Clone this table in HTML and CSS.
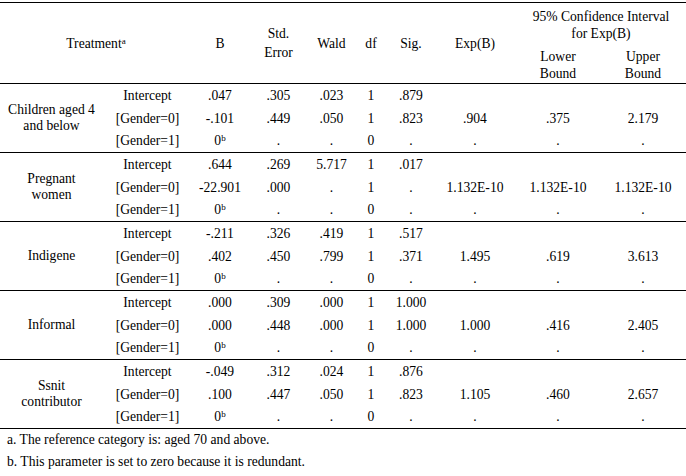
FILE: index.html
```html
<!DOCTYPE html>
<html>
<head>
<meta charset="utf-8">
<link rel="stylesheet" href="styles.css">
</head>
<body>
<div class="table">
  <div class="head">
    <div class="c treat"><span>Treatment<sup class="sup">a</sup></span></div>
    <div class="c h-b">B</div>
    <div class="c h-se"><span>Std.<br>Error</span></div>
    <div class="c h-wald">Wald</div>
    <div class="c h-df">df</div>
    <div class="c h-sig">Sig.</div>
    <div class="c h-exp">Exp(B)</div>
    <div class="c ci"><span>95% Confidence Interval<br>for Exp(B)</span></div>
    <div class="c lo"><span>Lower<br>Bound</span></div>
    <div class="c up"><span>Upper<br>Bound</span></div>
  </div>

  <div class="group">
    <div class="c label"><span>Children aged 4<br>and below</span></div>
    <div class="c">Intercept</div><div class="c">.047</div><div class="c">.305</div><div class="c">.023</div><div class="c">1</div><div class="c">.879</div><div class="c"></div><div class="c"></div><div class="c"></div>
    <div class="c">[Gender=0]</div><div class="c">-.101</div><div class="c">.449</div><div class="c">.050</div><div class="c">1</div><div class="c">.823</div><div class="c">.904</div><div class="c">.375</div><div class="c">2.179</div>
    <div class="c">[Gender=1]</div><div class="c"><span>0<sup class="sup">b</sup></span></div><div class="c">.</div><div class="c">.</div><div class="c">0</div><div class="c">.</div><div class="c">.</div><div class="c">.</div><div class="c">.</div>
  </div>

  <div class="group">
    <div class="c label"><span>Pregnant<br>women</span></div>
    <div class="c">Intercept</div><div class="c">.644</div><div class="c">.269</div><div class="c">5.717</div><div class="c">1</div><div class="c">.017</div><div class="c"></div><div class="c"></div><div class="c"></div>
    <div class="c">[Gender=0]</div><div class="c">-22.901</div><div class="c">.000</div><div class="c">.</div><div class="c">1</div><div class="c">.</div><div class="c">1.132E-10</div><div class="c">1.132E-10</div><div class="c">1.132E-10</div>
    <div class="c">[Gender=1]</div><div class="c"><span>0<sup class="sup">b</sup></span></div><div class="c">.</div><div class="c">.</div><div class="c">0</div><div class="c">.</div><div class="c">.</div><div class="c">.</div><div class="c">.</div>
  </div>

  <div class="group">
    <div class="c label">Indigene</div>
    <div class="c">Intercept</div><div class="c">-.211</div><div class="c">.326</div><div class="c">.419</div><div class="c">1</div><div class="c">.517</div><div class="c"></div><div class="c"></div><div class="c"></div>
    <div class="c">[Gender=0]</div><div class="c">.402</div><div class="c">.450</div><div class="c">.799</div><div class="c">1</div><div class="c">.371</div><div class="c">1.495</div><div class="c">.619</div><div class="c">3.613</div>
    <div class="c">[Gender=1]</div><div class="c"><span>0<sup class="sup">b</sup></span></div><div class="c">.</div><div class="c">.</div><div class="c">0</div><div class="c">.</div><div class="c">.</div><div class="c">.</div><div class="c">.</div>
  </div>

  <div class="group">
    <div class="c label">Informal</div>
    <div class="c">Intercept</div><div class="c">.000</div><div class="c">.309</div><div class="c">.000</div><div class="c">1</div><div class="c">1.000</div><div class="c"></div><div class="c"></div><div class="c"></div>
    <div class="c">[Gender=0]</div><div class="c">.000</div><div class="c">.448</div><div class="c">.000</div><div class="c">1</div><div class="c">1.000</div><div class="c">1.000</div><div class="c">.416</div><div class="c">2.405</div>
    <div class="c">[Gender=1]</div><div class="c"><span>0<sup class="sup">b</sup></span></div><div class="c">.</div><div class="c">.</div><div class="c">0</div><div class="c">.</div><div class="c">.</div><div class="c">.</div><div class="c">.</div>
  </div>

  <div class="group">
    <div class="c label"><span>Ssnit<br>contributor</span></div>
    <div class="c">Intercept</div><div class="c">-.049</div><div class="c">.312</div><div class="c">.024</div><div class="c">1</div><div class="c">.876</div><div class="c"></div><div class="c"></div><div class="c"></div>
    <div class="c">[Gender=0]</div><div class="c">.100</div><div class="c">.447</div><div class="c">.050</div><div class="c">1</div><div class="c">.823</div><div class="c">1.105</div><div class="c">.460</div><div class="c">2.657</div>
    <div class="c">[Gender=1]</div><div class="c"><span>0<sup class="sup">b</sup></span></div><div class="c">.</div><div class="c">.</div><div class="c">0</div><div class="c">.</div><div class="c">.</div><div class="c">.</div><div class="c">.</div>
  </div>

  <div class="notes">
    <div class="note">a. The reference category is: aged 70 and above.</div>
    <div class="note">b. This parameter is set to zero because it is redundant.</div>
  </div>
</div>
</body>
</html>
```

FILE: styles.css
```css
html, body {
  margin: 0;
  padding: 0;
  background: #fff;
}
body {
  font-family: "Liberation Serif", "Times New Roman", serif;
  font-size: 13.6px;
  color: #000;
}
.table {
  width: 686px;
  margin-top: 2px;
  border-top: 1px solid #000;
}
.head,
.group {
  display: grid;
  grid-template-columns: 103px 89px 56px 61px 45px 34px 46px 82px 84px 86px;
  border-bottom: 1px solid #000;
}
.head {
  grid-template-rows: 43px 37px;
  line-height: 17px;
}
.group {
  grid-template-rows: 23px 23px 22px;
  line-height: 16px;
}
.c {
  display: flex;
  align-items: center;
  justify-content: center;
  text-align: center;
  white-space: nowrap;
}
.treat { grid-column: 1 / 3; grid-row: 1 / 3; }
.h-b { grid-column: 3; grid-row: 1 / 3; }
.h-se { grid-column: 4; grid-row: 1 / 3; line-height: 19px; }
.h-wald { grid-column: 5; grid-row: 1 / 3; }
.h-df { grid-column: 6; grid-row: 1 / 3; }
.h-sig { grid-column: 7; grid-row: 1 / 3; }
.h-exp { grid-column: 8; grid-row: 1 / 3; }
.ci { grid-column: 9 / 11; grid-row: 1; }
.lo { grid-column: 9; grid-row: 2; }
.up { grid-column: 10; grid-row: 2; }
.label {
  grid-column: 1;
  grid-row: 1 / 4;
}
.sup {
  font-size: 9px;
  line-height: 0;
  vertical-align: 4px;
}
.notes {
  padding-left: 7px;
}
.note {
  height: 22px;
  line-height: 22px;
}
```
